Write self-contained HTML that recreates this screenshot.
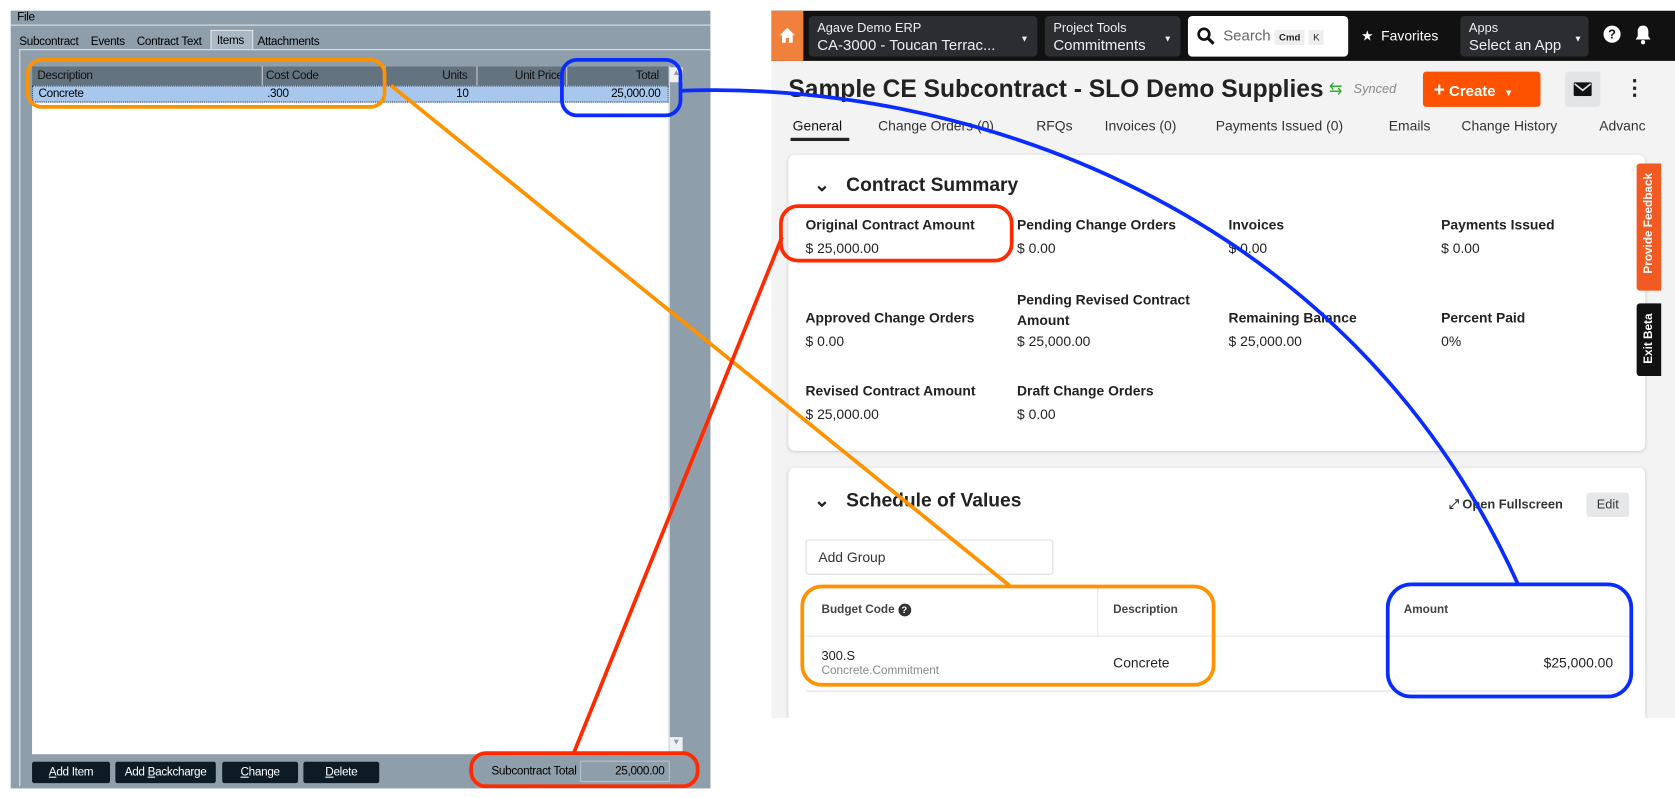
<!DOCTYPE html>
<html><head><meta charset="utf-8"><style>
*{box-sizing:border-box;margin:0;padding:0}
body{width:1675px;height:798px;overflow:hidden;background:#fff;font-family:"Liberation Sans",sans-serif}
#s{position:absolute;left:0;top:0;width:1568px;height:747px;transform:scale(1.0683);transform-origin:0 0}
.a{position:absolute}
.w{left:10px;top:10px;width:655px;height:728px;background:#8e9eab;font-size:11px;color:#000;letter-spacing:-0.3px}
.btn{position:absolute;top:703px;height:20px;background:#0c1b25;color:#fff;border-radius:2px;font-size:11px;text-align:center;line-height:20px}
.r{left:722px;top:10px;width:846px;height:662px;background:#f3f3f4;overflow:hidden;font-family:"Liberation Sans",sans-serif}
.lab{position:absolute;font-size:13px;font-weight:bold;color:#222}
.val{position:absolute;font-size:13px;color:#222}
</style></head><body><div id="s">
<div class="a w">
 <div class="a" style="left:6px;top:0">File</div>
 <div class="a" style="left:0;top:13px;width:655px;height:1px;background:#dfe6ec"></div>
 <div class="a" style="left:8px;top:23px">Subcontract</div>
 <div class="a" style="left:75px;top:23px">Events</div>
 <div class="a" style="left:118px;top:23px">Contract Text</div>
 <div class="a" style="left:187px;top:18px;width:40px;height:18px;background:#a9b8c4;border:1px solid #dfe6ec;border-bottom:none;padding:3px 5px">Items</div>
 <div class="a" style="left:231px;top:23px">Attachments</div>
 <div class="a" style="left:8px;top:36px;width:647px;height:690px;border:1px solid #dfe6ec;border-right:none;border-bottom:none;background:#8e9eab"></div>
 <div class="a" style="left:20px;top:52px;width:596px;height:644px;background:#fff"></div>
 <div class="a" style="left:20px;top:52px;width:596px;height:18px;background:#637380;color:#111">
  <span class="a" style="left:5px;top:3px">Description</span>
  <span class="a" style="left:215px;top:0;width:1px;height:18px;background:#ccc"></span>
  <span class="a" style="left:219px;top:3px">Cost Code</span>
  <span class="a" style="left:330px;top:0;width:1px;height:18px;background:#ccc"></span>
  <span class="a" style="left:384px;top:3px">Units</span>
  <span class="a" style="left:416px;top:0;width:1px;height:18px;background:#ccc"></span>
  <span class="a" style="left:452px;top:3px">Unit Price</span>
  <span class="a" style="left:500px;top:0;width:1px;height:18px;background:#ccc"></span>
  <span class="a" style="left:565px;top:3px">Total</span>
 </div>
 <div class="a" style="left:20px;top:70px;width:596px;height:16px;background:#a7c8ec;border:1px dotted #334">
  <span class="a" style="left:5px;top:1px">Concrete</span>
  <span class="a" style="left:219px;top:1px">.300</span>
  <span class="a" style="left:396px;top:1px">10</span>
  <span class="a" style="left:541px;top:1px">25,000.00</span>
 </div>
 <div class="a" style="left:616px;top:52px;width:15px;height:644px;background:#8e9eab;border-left:1px solid #dfe6ec"></div>
 <div class="a" style="left:617px;top:53px;width:12px;height:14px;background:#eef1f4;color:#99a;font-size:8px;text-align:center">▲</div>
 <div class="a" style="left:617px;top:680px;width:12px;height:14px;background:#eef1f4;color:#99a;font-size:8px;text-align:center">▼</div>
 <div class="btn" style="left:20px;width:73px"><u>A</u>dd Item</div>
 <div class="btn" style="left:98px;width:94px">Add <u>B</u>ackcharge</div>
 <div class="btn" style="left:198px;width:71px"><u>C</u>hange</div>
 <div class="btn" style="left:274px;width:71px"><u>D</u>elete</div>
 <div class="a" style="left:450px;top:706px">Subcontract Total</div>
 <div class="a" style="left:533px;top:702px;width:84px;height:20px;border:1px solid #b7c3cc;text-align:right;padding:3px 4px">25,000.00</div>
</div>

<div class="a r">
 <div class="a" style="left:0;top:0;width:846px;height:47px;background:#111"></div>
 <div class="a" style="left:0;top:0;width:30px;height:47px;background:#f0803c"><svg class="a" style="left:7px;top:15px" width="16" height="16" viewBox="0 0 16 16"><path d="M8 1 L1 8 H3 V15 H6.5 V10.5 H9.5 V15 H13 V8 H15 Z" fill="#fff"/></svg></div>
 <div class="a" style="left:35px;top:5px;width:214px;height:38px;background:#2b2d30;border-radius:4px;color:#eee;padding:3px 8px;font-size:12px;line-height:16px">Agave Demo ERP<br><span style="font-size:14px">CA-3000 - Toucan Terrac...</span><span class="a" style="right:8px;top:14px;font-size:8px">▼</span></div>
 <div class="a" style="left:256px;top:5px;width:127px;height:38px;background:#2b2d30;border-radius:4px;color:#eee;padding:3px 8px;font-size:12px;line-height:16px">Project Tools<br><span style="font-size:14px">Commitments</span><span class="a" style="right:8px;top:14px;font-size:8px">▼</span></div>
 <div class="a" style="left:390px;top:5px;width:150px;height:38px;background:#fff;border-radius:4px;color:#666;font-size:14px;padding:10px 8px 0 33px">Search <span style="background:#eee;font-size:9px;padding:2px 4px;color:#222;font-weight:bold">Cmd</span> <span style="background:#eee;font-size:9px;padding:2px 4px;color:#222">K</span>
  <svg class="a" style="left:8px;top:10px" width="18" height="18" viewBox="0 0 18 18"><circle cx="7" cy="7" r="5" stroke="#111" stroke-width="2.5" fill="none"/><path d="M11 11 L16 16" stroke="#111" stroke-width="3"/></svg></div>
 <div class="a" style="left:552px;top:16px;color:#fff;font-size:13px">★ &nbsp;Favorites</div>
 <div class="a" style="left:645px;top:5px;width:120px;height:38px;background:#2b2d30;border-radius:4px;color:#eee;padding:3px 8px;font-size:12px;line-height:16px">Apps<br><span style="font-size:14px">Select an App</span><span class="a" style="right:6px;top:14px;font-size:8px">▼</span></div>
 <div class="a" style="left:779px;top:14px;width:16px;height:16px;border-radius:50%;background:#fff;color:#111;font-size:12px;font-weight:bold;text-align:center;line-height:16px">?</div>
 <svg class="a" style="left:808px;top:13px" width="16" height="19" viewBox="0 0 16 19"><path d="M8 1 C4 1 3 4 3 7 V11 L1 14 H15 L13 11 V7 C13 4 12 1 8 1 Z" fill="#fff"/><circle cx="8" cy="16.5" r="2" fill="#fff"/></svg>
 <div class="a" style="left:16px;top:60px;font-size:23px;font-weight:bold;color:#222">Sample CE Subcontract - SLO Demo Supplies</div>
 <div class="a" style="left:522px;top:64px;color:#3a3;font-size:15px">⇆</div>
 <div class="a" style="left:545px;top:66px;color:#888;font-size:12px;font-style:italic">Synced</div>
 <div class="a" style="left:610px;top:57px;width:110px;height:33px;background:#ff5200;border-radius:3px;color:#fff;font-size:14px;font-weight:bold;padding:7px 10px"><span style="font-size:18px">+</span> Create &nbsp;<span style="font-size:9px">▼</span></div>
 <div class="a" style="left:743px;top:57px;width:33px;height:33px;background:#e3e4e6;border-radius:3px"><svg class="a" style="left:8px;top:10px" width="17" height="13" viewBox="0 0 17 13"><rect width="17" height="13" rx="1.5" fill="#111"/><path d="M1 1.5 L8.5 7.5 L16 1.5" stroke="#e3e4e6" stroke-width="1.6" fill="none"/></svg></div>
 <div class="a" style="left:798px;top:60px;font-size:20px;font-weight:bold;color:#222">⋮</div>
 <div class="a" style="left:0;top:97px;width:846px;height:26px;font-size:13px;color:#333;white-space:nowrap">
  <span class="a" style="left:20px;top:3px;color:#111">General</span><span class="a" style="left:18px;top:22px;width:55px;height:3px;background:#222"></span>
  <span class="a" style="left:100px;top:3px">Change Orders (0)</span>
  <span class="a" style="left:248px;top:3px">RFQs</span>
  <span class="a" style="left:312px;top:3px">Invoices (0)</span>
  <span class="a" style="left:416px;top:3px">Payments Issued (0)</span>
  <span class="a" style="left:578px;top:3px">Emails</span>
  <span class="a" style="left:646px;top:3px">Change History</span>
  <span class="a" style="left:775px;top:3px">Advanc</span>
 </div>
 <div class="a" style="left:16px;top:135px;width:802px;height:277px;background:#fff;border-radius:6px;box-shadow:0 1px 3px #ccc">
  <div class="a" style="left:24px;top:18px;font-size:18px;font-weight:bold;color:#222">⌄ &nbsp;&nbsp;Contract Summary</div>
  <div class="lab" style="left:16px;top:58px">Original Contract Amount</div><div class="val" style="left:16px;top:80px">$ 25,000.00</div>
  <div class="lab" style="left:214px;top:58px">Pending Change Orders</div><div class="val" style="left:214px;top:80px">$ 0.00</div>
  <div class="lab" style="left:412px;top:58px">Invoices</div><div class="val" style="left:412px;top:80px">$ 0.00</div>
  <div class="lab" style="left:611px;top:58px">Payments Issued</div><div class="val" style="left:611px;top:80px">$ 0.00</div>
  <div class="lab" style="left:214px;top:126px;line-height:19px">Pending Revised Contract<br>Amount</div>
  <div class="lab" style="left:16px;top:145px">Approved Change Orders</div><div class="val" style="left:16px;top:167px">$ 0.00</div>
  <div class="val" style="left:214px;top:167px">$ 25,000.00</div>
  <div class="lab" style="left:412px;top:145px">Remaining Balance</div><div class="val" style="left:412px;top:167px">$ 25,000.00</div>
  <div class="lab" style="left:611px;top:145px">Percent Paid</div><div class="val" style="left:611px;top:167px">0%</div>
  <div class="lab" style="left:16px;top:213px">Revised Contract Amount</div><div class="val" style="left:16px;top:235px">$ 25,000.00</div>
  <div class="lab" style="left:214px;top:213px">Draft Change Orders</div><div class="val" style="left:214px;top:235px">$ 0.00</div>
 </div>
 <div class="a" style="left:16px;top:428px;width:802px;height:260px;background:#fff;border-radius:6px;box-shadow:0 1px 3px #ccc">
  <div class="a" style="left:24px;top:20px;font-size:18px;font-weight:bold;color:#222">⌄ &nbsp;&nbsp;Schedule of Values</div>
  <div class="a" style="left:618px;top:27px;font-size:12px;font-weight:bold;color:#333">⤢ Open Fullscreen</div>
  <div class="a" style="left:747px;top:23px;width:40px;height:23px;background:#e6e7e8;border-radius:3px;font-size:12px;text-align:center;line-height:23px;color:#333">Edit</div>
  <div class="a" style="left:16px;top:67px;width:232px;height:33px;border:1px solid #ddd;border-radius:3px;font-size:13px;padding:8px 11px;color:#333">Add Group</div>
  <div class="a" style="left:16px;top:110px;width:771px;height:100px;border-bottom:2px solid #eee">
   <div class="a" style="left:0;top:47px;width:771px;height:1px;background:#e6e6e6"></div>
   <div class="a" style="left:273px;top:0;width:1px;height:47px;background:#e6e6e6"></div>
   <div class="a" style="left:15px;top:17px;font-size:11px;font-weight:bold;color:#444">Budget Code <span style="display:inline-block;width:12px;height:12px;border-radius:50%;background:#333;color:#fff;text-align:center;font-size:9px;line-height:12px">?</span></div>
   <div class="a" style="left:288px;top:17px;font-size:11px;font-weight:bold;color:#444">Description</div>
   <div class="a" style="left:560px;top:17px;font-size:11px;font-weight:bold;color:#444">Amount</div>
   <div class="a" style="left:15px;top:59px;font-size:12px;color:#222">300.S</div>
   <div class="a" style="left:15px;top:74px;font-size:11px;color:#888">Concrete.Commitment</div>
   <div class="a" style="left:288px;top:65px;font-size:13px;color:#222">Concrete</div>
   <div class="a" style="right:15px;top:65px;font-size:13px;color:#222">$25,000.00</div>
  </div>
 </div>
 <div class="a" style="left:810px;top:143px;width:23px;height:119px;background:#f15a22;border-radius:3px 0 0 3px"><div class="a" style="left:-44px;top:50px;width:111px;transform:rotate(-90deg);color:#fff;font-size:11px;font-weight:bold;text-align:center">Provide Feedback</div></div>
 <div class="a" style="left:810px;top:274px;width:23px;height:68px;background:#111;border-radius:3px 0 0 3px"><div class="a" style="left:-22px;top:27px;width:67px;transform:rotate(-90deg);color:#fff;font-size:11px;font-weight:bold;text-align:center">Exit Beta</div></div>
</div>

<svg class="a" style="left:0;top:0" width="1568" height="747" fill="none" stroke-width="3.5">
 <rect x="26" y="56" width="334" height="44" rx="13" stroke="#ff9200"/>
 <rect x="526" y="56" width="111" height="52" rx="14" stroke="#0a2cff"/>
 <rect x="751" y="549" width="385" height="92" rx="18" stroke="#ff9200"/>
 <rect x="1299" y="547" width="228" height="105" rx="22" stroke="#0a2cff"/>
 <rect x="731" y="193" width="216" height="51" rx="16" stroke="#ff2a00"/>
 <rect x="441" y="705" width="212" height="31" rx="14" stroke="#ff2a00"/>
 <path d="M366 80 L946 549" stroke="#ff9200"/>
 <path d="M537 705 L732 222" stroke="#ff2a00"/>
 <path d="M637 85 C900 75 1260 190 1421 547" stroke="#0a2cff"/>
</svg>
</div></body></html>
